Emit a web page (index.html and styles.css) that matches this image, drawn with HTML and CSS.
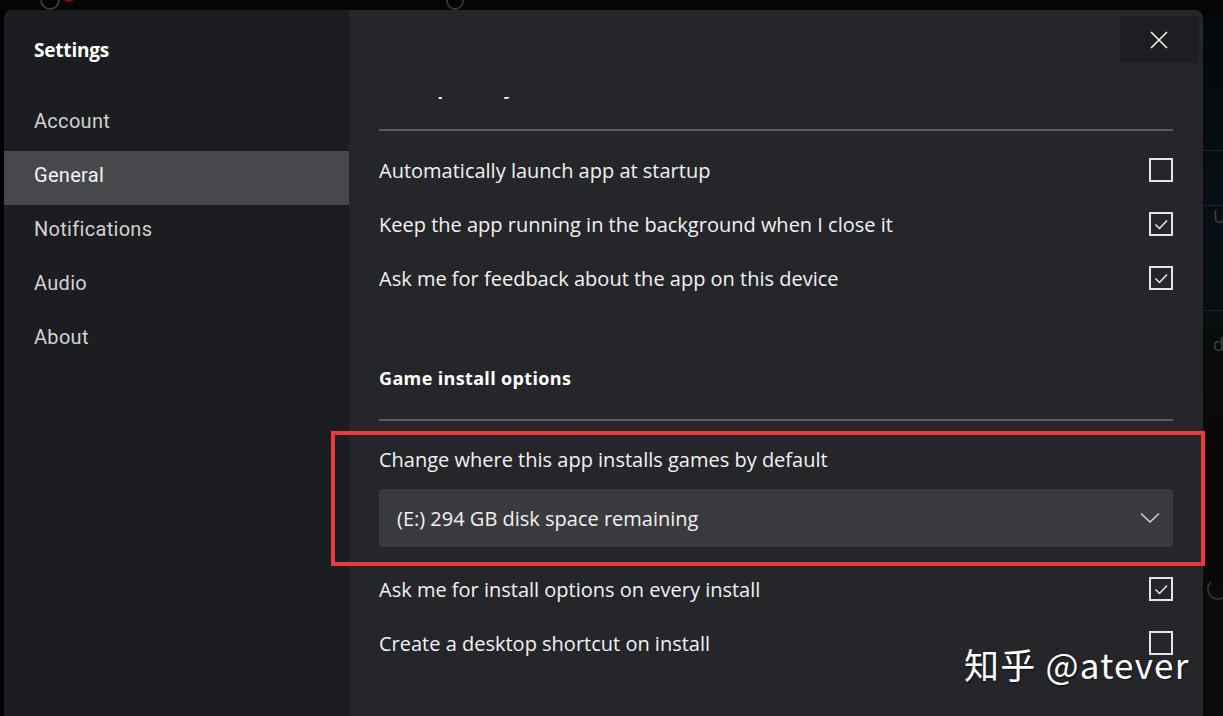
FILE: index.html
```html
<!DOCTYPE html>
<html lang="en">
<head>
<meta charset="utf-8">
<title>Settings</title>
<link rel="stylesheet" href="styles.css">
</head>
<body>
<div class="stage">
  <div class="backdrop-top">
    <span class="bg-search"></span>
    <span class="bg-dot"></span>
    <span class="bg-search bg-search-2"></span>
  </div>
  <div class="main">
    <div class="dialog">
      <nav class="nav">
        <div class="nav-title">Settings</div>
        <div class="nav-item">Account</div>
        <div class="nav-item selected">General</div>
        <div class="nav-item">Notifications</div>
        <div class="nav-item">Audio</div>
        <div class="nav-item">About</div>
      </nav>
      <section class="content">
        <div class="content-header">
          <button class="close" aria-label="Close">
            <svg width="20" height="20" viewBox="0 0 20 20"><path d="M2 2 L18 18 M18 2 L2 18" stroke="#f2f2f2" stroke-width="1.6" fill="none"/></svg>
          </button>
        </div>
        <div class="scroll">
          <div class="clip-head"><h2 class="section-title clipped">Startup and sync</h2></div>
          <div class="rule"></div>
          <div class="rows">
            <div class="row"><span>Automatically launch app at startup</span><span class="check"></span></div>
            <div class="row"><span>Keep the app running in the background when I close it</span><span class="check on"><svg viewBox="0 0 20 20"><path d="M4.5 10.5 L8.5 14.5 L16 6.5" stroke="#eaeaea" stroke-width="1.5" fill="none"/></svg></span></div>
            <div class="row"><span>Ask me for feedback about the app on this device</span><span class="check on"><svg viewBox="0 0 20 20"><path d="M4.5 10.5 L8.5 14.5 L16 6.5" stroke="#eaeaea" stroke-width="1.5" fill="none"/></svg></span></div>
          </div>
          <h2 class="section-title game">Game install options</h2>
          <div class="rule rule-2"></div>
          <div class="install">
            <div class="install-label">Change where this app installs games by default</div>
            <div class="dropdown">
              <span>(E:) 294 GB disk space remaining</span>
              <svg class="chev" width="20" height="12" viewBox="0 0 20 12"><path d="M1 1.5 L10 10 L19 1.5" stroke="#d8d8d8" stroke-width="1.5" fill="none"/></svg>
            </div>
            <div class="highlight"></div>
          </div>
          <div class="rows rows-2">
            <div class="row"><span>Ask me for install options on every install</span><span class="check on"><svg viewBox="0 0 20 20"><path d="M4.5 10.5 L8.5 14.5 L16 6.5" stroke="#eaeaea" stroke-width="1.5" fill="none"/></svg></span></div>
            <div class="row"><span>Create a desktop shortcut on install</span><span class="check"></span></div>
          </div>
        </div>
      </section>
    </div>
    <div class="backdrop-right">
      <div class="bg-line" style="top:140px"></div>
      <div class="bg-line" style="top:195px"></div>
      <div class="bg-text" style="top:194px">U</div>
      <div class="bg-line" style="top:300px"></div>
      <div class="bg-text" style="top:322px">da</div>
      <div class="bg-refresh"></div>
    </div>
  </div>
  <div class="watermark">知乎 @atever</div>
</div>
</body>
</html>
```

FILE: styles.css
```css
* { box-sizing: border-box; }
html, body { margin: 0; padding: 0; }
body {
  background: #000;
  width: 1223px;
  height: 716px;
  overflow: hidden;
  font-family: "Open Sans", "Noto Sans", sans-serif;
}
.stage {
  position: relative;
  width: 1223px;
  height: 716px;
  display: flex;
  flex-direction: column;
}
.backdrop-top {
  height: 10px;
  position: relative;
  background: #050505;
  flex: none;
}
.bg-search {
  position: absolute;
  left: 40px;
  top: -10px;
  width: 20px;
  height: 20px;
  border: 2px solid #3a3a3a;
  border-radius: 50%;
}
.bg-search-2 { left: 446px; top: -8px; width: 18px; height: 18px; border-color: #333; }
.bg-dot {
  position: absolute;
  left: 64px;
  top: -4px;
  width: 10px;
  height: 6px;
  border-radius: 50%;
  background: #7a0f14;
}
.main {
  flex: 1;
  display: flex;
  padding-left: 4px;
}
.dialog {
  width: 1199px;
  display: flex;
  position: relative;
  z-index: 1;
}
.nav {
  width: 345px;
  flex: none;
  background: #1c1d20;
  border-top-left-radius: 8px;
  font-family: Roboto, "Noto Sans", sans-serif;
}
.nav-title {
  height: 87px;
  padding: 27px 0 0 30px;
  font-size: 19px;
  font-weight: 700;
  color: #ffffff;
  font-family: "Open Sans", sans-serif;
  letter-spacing: -0.2px;
}
.nav-item {
  height: 54px;
  display: flex;
  align-items: center;
  padding: 0 0 6px 30px;
  font-size: 20px;
  color: #d2d2d2;
  letter-spacing: 0.3px;
}
.nav-item.selected {
  background: #47484b;
  color: #f2f2f2;
}
.content {
  flex: 1;
  display: flex;
  flex-direction: column;
  background: #25262a;
  border-top-right-radius: 8px;
  min-width: 0;
}
.content-header {
  height: 87px;
  flex: none;
  display: flex;
  justify-content: flex-end;
  padding: 6px 5px 0 0;
}
.close {
  width: 78px;
  height: 47px;
  border: none;
  background: #1d1e21;
  display: flex;
  align-items: center;
  justify-content: center;
  padding: 0;
}
.scroll {
  flex: 1;
  padding: 0 30px 0 30px;
  color: #f2f2f2;
  font-size: 20px;
  letter-spacing: 0;
}
.clip-head {
  height: 8px;
  overflow: hidden;
}
.section-title {
  margin: 0;
  height: 24px;
  line-height: 24px;
  font-size: 18px;
  font-weight: 700;
  color: #ffffff;
  letter-spacing: 0.35px;
}
.section-title.clipped { margin-top: -21px; }
.rule {
  height: 2px;
  background: #5d5e62;
  margin-top: 25px;
}
.clip-head + .rule { margin-top: 24px; }
.rows { margin-top: 12px; }
.row {
  height: 54px;
  display: flex;
  align-items: center;
  justify-content: space-between;
}
.check {
  width: 24px;
  height: 24px;
  border: 2px solid #e6e6e6;
  display: flex;
}
.check svg { width: 100%; height: 100%; }
.section-title.game { margin-top: 61px; }
.rule-2 { margin-top: 29px; }
.install {
  position: relative;
  margin-top: 25px;
}
.install-label {
  height: 28px;
  line-height: 28px;
}
.dropdown {
  margin-top: 15px;
  height: 58px;
  background: #3a3b3f;
  border-radius: 4px;
  display: flex;
  align-items: center;
  justify-content: space-between;
  padding: 0 5px 0 18px;
}
.chev { margin-right: 8px; }
.highlight {
  position: absolute;
  left: -48px;
  right: -32px;
  top: -15px;
  bottom: -19px;
  border: 4px solid #ea3a40;
  pointer-events: none;
}
.rows-2 { margin-top: 15px; }
.backdrop-right {
  flex: 1;
  position: relative;
  background: linear-gradient(180deg, #04070a 0%, #061014 30%, #0b0907 60%, #0c0a08 100%);
}
.bg-line {
  position: absolute;
  left: 0;
  right: 0;
  height: 1px;
  background: #1b2326;
}
.bg-text {
  position: absolute;
  left: 10px;
  font-family: "Open Sans", sans-serif;
  font-size: 18px;
  color: #3c3f40;
}
.bg-refresh {
  position: absolute;
  left: 4px;
  top: 568px;
  width: 22px;
  height: 22px;
  border: 2px solid #2e2e2e;
  border-radius: 50%;
  border-top-color: transparent;
}
.watermark {
  position: absolute;
  z-index: 2;
  left: 964px;
  top: 639px;
  font-family: "Noto Sans CJK SC", "Open Sans", sans-serif;
  font-size: 35px;
  line-height: 50px;
  color: #ffffff;
  text-shadow: 1px 1px 2px rgba(0,0,0,0.6);
  letter-spacing: 1.2px;
}
```
